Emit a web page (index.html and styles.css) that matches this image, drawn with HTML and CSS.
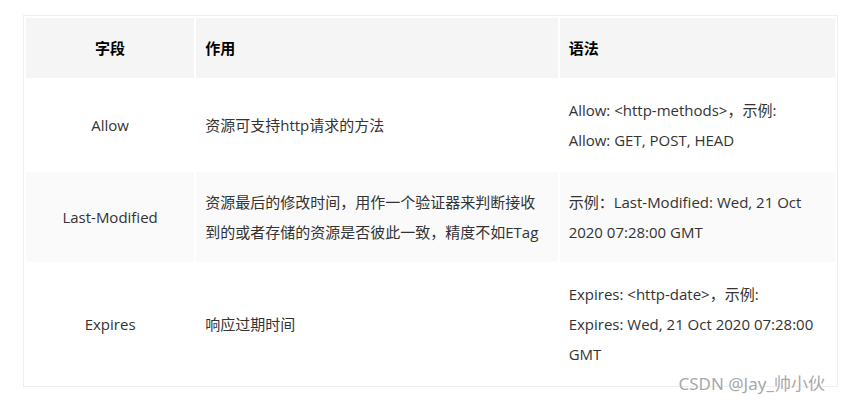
FILE: index.html
```html
<!DOCTYPE html>
<html lang="zh-CN">
<head>
    <meta charset="UTF-8">
    <meta name="viewport" content="width=device-width, initial-scale=1.0">
    <title>HTTP 响应头</title>
    <link rel="stylesheet" href="styles.css">
</head>
<body>
    <div class="wrap">
        <table class="header-table">
            <colgroup>
                <col class="col-field">
                <col class="col-use">
                <col class="col-syntax">
            </colgroup>
            <thead>
                <tr>
                    <th class="center">字段</th>
                    <th>作用</th>
                    <th>语法</th>
                </tr>
            </thead>
            <tbody>
                <tr>
                    <td class="center">Allow</td>
                    <td>资源可支持http请求的方法</td>
                    <td>Allow: &lt;http-methods&gt;，示例:<br>Allow: GET, POST, HEAD</td>
                </tr>
                <tr class="alt">
                    <td class="center">Last-Modified</td>
                    <td>资源最后的修改时间，用作一个验证器来判断接收<br>到的或者存储的资源是否彼此一致，精度不如ETag</td>
                    <td>示例：Last-Modified: Wed, 21 Oct<br>2020 07:28:00 GMT</td>
                </tr>
                <tr>
                    <td class="center">Expires</td>
                    <td>响应过期时间</td>
                    <td>Expires: &lt;http-date&gt;，示例:<br>Expires: Wed, 21 Oct 2020 07:28:00<br>GMT</td>
                </tr>
            </tbody>
        </table>
        <span class="watermark">CSDN @Jay_帅小伙</span>
    </div>
</body>
</html>
```

FILE: styles.css
```css
:root {
    --text-color: #333;
    --head-bg: #f5f5f5;
    --alt-bg: #fafafa;
    --border-color: #eee;
}

body {
    margin: 0;
    padding: 15px 0 0 23px;
    background-color: #fff;
    color: var(--text-color);
    font-family: "Open Sans", "Noto Sans CJK SC", sans-serif;
    font-size: 15px;
}

.wrap {
    position: relative;
    width: 815px;
    padding-bottom: 20px;
}

.header-table {
    width: 815px;
    border: 1px solid var(--border-color);
    border-collapse: separate;
    border-spacing: 2px;
    table-layout: fixed;
}

.col-field {
    width: 168px;
}

.col-use {
    width: 361px;
}

.col-syntax {
    width: 275px;
}

th,
td {
    padding: 15px 9px;
    line-height: 30px;
    text-align: left;
    vertical-align: middle;
    white-space: nowrap;
}

th {
    background-color: var(--head-bg);
    color: #000;
    font-weight: bold;
}

tr.alt td {
    background-color: var(--alt-bg);
}

.center {
    text-align: center;
}

/* watermark sits over the table's bottom edge */
.watermark {
    position: absolute;
    right: 13px;
    bottom: 12px;
    color: #a8a8a8;
    font-family: "Noto Sans", "Noto Sans CJK SC", sans-serif;
    font-size: 17px;
    line-height: 22px;
    text-shadow: 0 0 2px #fff, 0 0 2px #fff;
}
```
